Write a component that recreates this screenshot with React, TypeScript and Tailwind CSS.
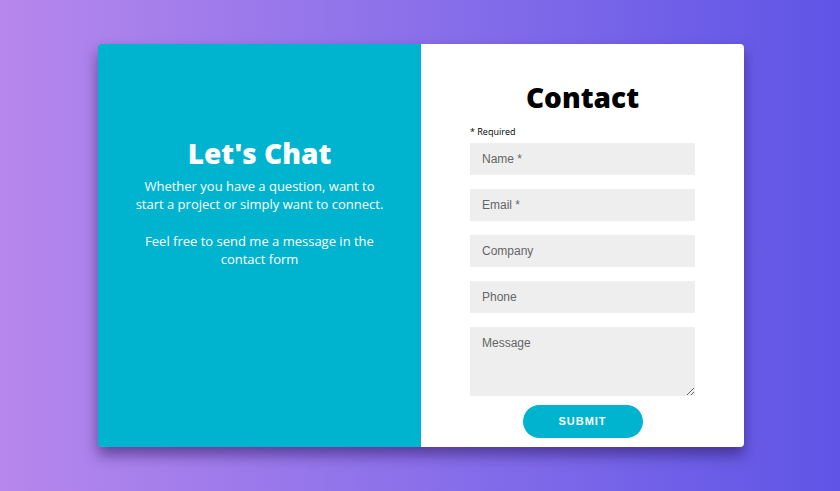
export default function App() {
  const fields = ["Name *", "Email *", "Company", "Phone"];
  return (
    <div className="w-[840px] h-[491px] flex items-center justify-center bg-gradient-to-r from-[#b787ec] to-[#5f54e6] font-['Open_Sans',sans-serif]">
      <div className="flex w-[646px] h-[403px] rounded-[4px] overflow-hidden shadow-[0_8px_14px_rgba(40,20,90,0.55)] ml-[2px]">
        <div className="w-[323px] bg-[#00b3cf] text-white flex flex-col items-center pt-[90px] text-center">
          <h1 className="text-[28px] font-extrabold leading-[38px]">Let's Chat</h1>
          <p className="mt-[5px] text-[13px] leading-[18px]">
            Whether you have a question, want to
            <br />
            start a project or simply want to connect.
          </p>
          <p className="mt-[19px] text-[13px] leading-[18px]">
            Feel free to send me a message in the
            <br />
            contact form
          </p>
        </div>
        <div className="w-[323px] bg-white flex flex-col pl-[49px] pr-[49px]">
          <h2 className="mt-[34px] text-center text-[28px] font-extrabold leading-[38px] text-black">Contact</h2>
          <div className="mt-[10px] text-[9px] leading-[12px] text-black">* Required</div>
          <div className="mt-[5px] flex flex-col gap-[14px] font-['Liberation_Sans',Arial,sans-serif]">
            {fields.map((f) => (
              <input
                key={f}
                placeholder={f}
                className="h-[32px] w-[225px] bg-[#eeeeee] pl-[12px] text-[12px] text-[#555] placeholder:text-[#666] outline-none"
              />
            ))}
            <textarea
              placeholder="Message"
              className="h-[69px] w-[225px] bg-[#eeeeee] pl-[12px] pt-[7px] text-[12px] placeholder:text-[#666] outline-none"
            />
          </div>
          <div className="mt-[9px] flex justify-center">
            <button className="w-[120px] h-[33px] rounded-full bg-[#00b3cf] text-white text-[11px] font-bold tracking-[1px] font-['Liberation_Sans',Arial,sans-serif]">
              SUBMIT
            </button>
          </div>
        </div>
      </div>
    </div>
  );
}
